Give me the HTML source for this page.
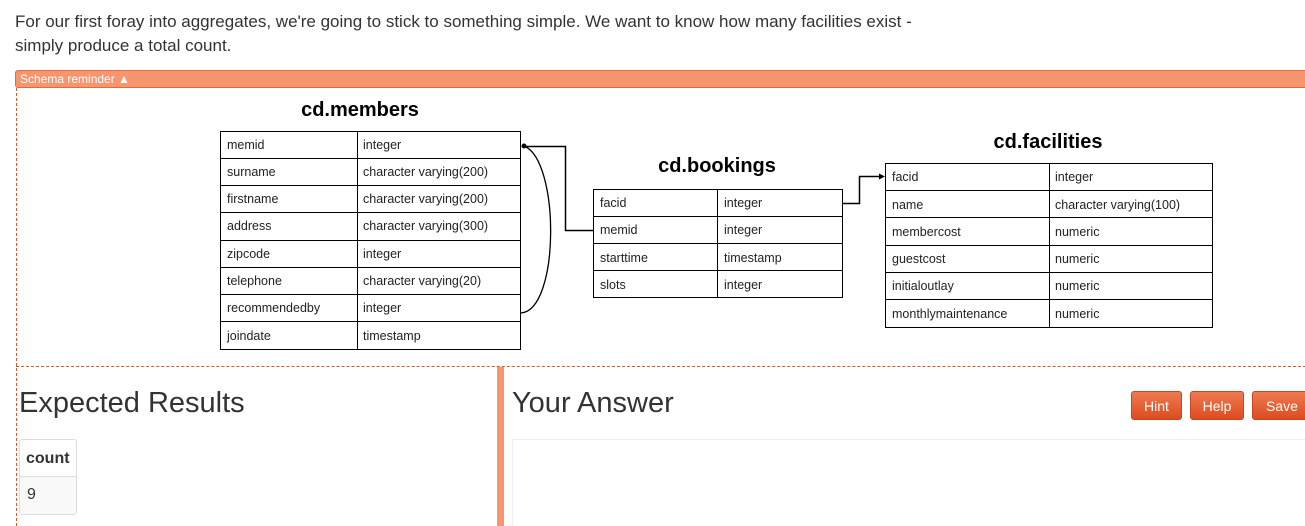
<!DOCTYPE html>
<html><head><style>
html,body{margin:0;width:1305px;height:526px;overflow:hidden}
body{background:#fff;font-family:"Liberation Sans","DejaVu Sans",sans-serif;color:#333;position:relative}
.p{position:absolute;left:15px;top:10px;font-size:17px;line-height:24px;width:1000px}
.bar{position:absolute;left:15px;top:70px;width:1295px;height:18px;background:#f7956e;border:1px solid #e06a3e;border-radius:3px 0 0 3px;color:#fff;font-size:12px;line-height:17px;padding-left:4px;box-sizing:border-box}
.dl{position:absolute;left:16px;top:88px;height:438px;border-left:1px dashed #d85a2a}
.db{position:absolute;left:16px;top:366px;width:1290px;border-top:1px dashed #d85a2a}
.div{position:absolute;left:497px;top:367px;width:7px;height:159px;background:#f7956e}
h2{position:absolute;margin:0;font-weight:normal;font-size:29px;color:#333}
.ct{position:absolute;left:19px;top:439px;width:56px;height:74px;border:1px solid #ddd;border-radius:3px;font-size:16px}
.ct .h{height:36px;line-height:37px;padding-left:6px;font-weight:bold;border-bottom:1px solid #ddd}
.ct .v{height:37px;line-height:36px;padding-left:7px;background:#f9f9f9}
.btn{position:absolute;top:391px;height:29px;border-radius:3px;background:linear-gradient(#ef7a52,#dc4c1f);border:1px solid #c9461f;color:#fff;font-size:14px;line-height:29px;text-align:center;box-sizing:border-box}
.ans{position:absolute;left:512px;top:439px;width:800px;height:87px;border-top:1px solid #eee;border-left:1px solid #eee}
</style></head><body>
<div class="p">For our first foray into aggregates, we're going to stick to something simple. We want to know how many facilities exist -<br>simply produce a total count.</div>
<div class="bar">Schema reminder ▲</div>
<div class="dl"></div><div class="db"></div>
<svg style="position:absolute;left:0;top:0" width="1305" height="366" font-family="Liberation Sans,Arial,sans-serif">
<g font-weight="bold" font-size="20" fill="#000" text-anchor="middle">
<text x="360" y="116">cd.members</text>
<text x="717" y="172">cd.bookings</text>
<text x="1048" y="148">cd.facilities</text>
</g>
<g stroke="#000" stroke-width="1" fill="none">
<rect x="220.5" y="131.5" width="300" height="218"/>
<line x1="357.5" y1="131" x2="357.5" y2="349"/>
<line x1="220" y1="158.5" x2="520" y2="158.5"/><line x1="220" y1="185.5" x2="520" y2="185.5"/><line x1="220" y1="212.5" x2="520" y2="212.5"/><line x1="220" y1="240.5" x2="520" y2="240.5"/><line x1="220" y1="267.5" x2="520" y2="267.5"/><line x1="220" y1="294.5" x2="520" y2="294.5"/><line x1="220" y1="321.5" x2="520" y2="321.5"/>
<rect x="593.5" y="189.5" width="249" height="108"/>
<line x1="717.5" y1="189" x2="717.5" y2="298"/>
<line x1="593" y1="216.5" x2="842" y2="216.5"/><line x1="593" y1="243.5" x2="842" y2="243.5"/><line x1="593" y1="270.5" x2="842" y2="270.5"/>
<rect x="885.5" y="163.5" width="327" height="164"/>
<line x1="1049.5" y1="163" x2="1049.5" y2="327"/>
<line x1="885" y1="190.5" x2="1212" y2="190.5"/><line x1="885" y1="217.5" x2="1212" y2="217.5"/><line x1="885" y1="245.5" x2="1212" y2="245.5"/><line x1="885" y1="272.5" x2="1212" y2="272.5"/><line x1="885" y1="299.5" x2="1212" y2="299.5"/>
<path d="M593 230.5H565.5V146.5H524" stroke-width="1.5"/>
<path d="M521 313C560 310 560 160 524 146" stroke-width="1.3"/>
<path d="M842 203.5H859.5V176.5H880" stroke-width="1.5"/>
</g>
<circle cx="524" cy="146" r="2.5" fill="#000"/>
<path d="M885 176.5l-6-3v6z" fill="#000"/>
<g font-size="12.5" fill="#222">
<text x="227" y="149">memid</text><text x="363" y="149">integer</text>
<text x="227" y="176">surname</text><text x="363" y="176">character varying(200)</text>
<text x="227" y="203">firstname</text><text x="363" y="203">character varying(200)</text>
<text x="227" y="230">address</text><text x="363" y="230">character varying(300)</text>
<text x="227" y="258">zipcode</text><text x="363" y="258">integer</text>
<text x="227" y="285">telephone</text><text x="363" y="285">character varying(20)</text>
<text x="227" y="312">recommendedby</text><text x="363" y="312">integer</text>
<text x="227" y="340">joindate</text><text x="363" y="340">timestamp</text>
<text x="600" y="207">facid</text><text x="724" y="207">integer</text>
<text x="600" y="234">memid</text><text x="724" y="234">integer</text>
<text x="600" y="262">starttime</text><text x="724" y="262">timestamp</text>
<text x="600" y="289">slots</text><text x="724" y="289">integer</text>
<text x="892" y="181">facid</text><text x="1055" y="181">integer</text>
<text x="892" y="209">name</text><text x="1055" y="209">character varying(100)</text>
<text x="892" y="236">membercost</text><text x="1055" y="236">numeric</text>
<text x="892" y="263">guestcost</text><text x="1055" y="263">numeric</text>
<text x="892" y="290">initialoutlay</text><text x="1055" y="290">numeric</text>
<text x="892" y="318">monthlymaintenance</text><text x="1055" y="318">numeric</text>
</g>
</svg>
<div class="div"></div>
<h2 style="left:19px;top:387px">Expected Results</h2>
<h2 style="left:512px;top:387px">Your Answer</h2>
<div class="ct"><div class="h">count</div><div class="v">9</div></div>
<div class="btn" style="left:1131px;width:51px">Hint</div>
<div class="btn" style="left:1190px;width:54px">Help</div>
<div class="btn" style="left:1252px;width:60px">Save</div>
<div class="ans"></div>
</body></html>
